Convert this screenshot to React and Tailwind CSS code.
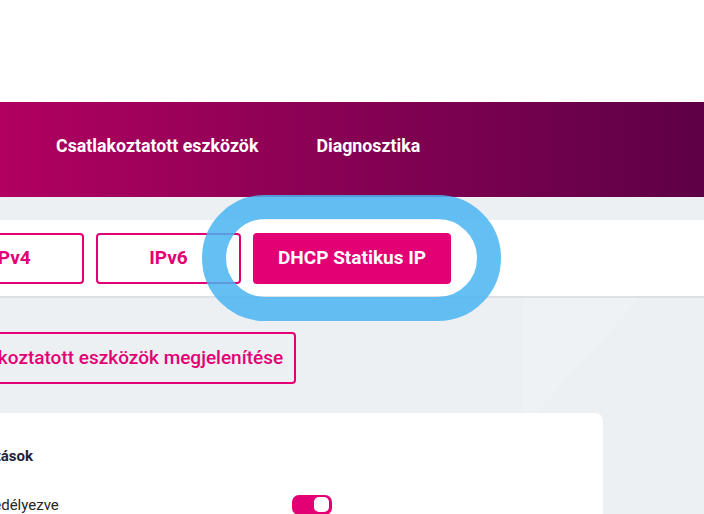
import React from 'react';

const font = { fontFamily: 'Roboto, "Noto Sans", sans-serif' };

function Toggle() {
  return (
    <div className="w-[40px] h-[20px] rounded-[7px] bg-[#e20074] flex items-center justify-end p-[3px]">
      <div className="w-[15px] h-[15px] rounded-[5px] bg-white" />
    </div>
  );
}

export default function App() {
  return (
    <div className="w-[704px] h-[514px] overflow-hidden bg-[#ecf0f3] relative" style={font}>
      {/* faint background decoration */}
      <svg className="absolute left-0 top-[298px] pointer-events-none" width="704" height="216">
        <polygon points="523,0 640,0 523,130" fill="#eff2f5" />
      </svg>

      <div className="h-[102px] bg-white relative" />

      <header className="relative h-[95px] bg-gradient-to-r from-[#b10060] to-[#5e0046] flex items-center pl-[56px] pb-[6px] gap-[58px] text-white font-bold text-[17.8px]">
        <span>Csatlakoztatott eszközök</span>
        <span>Diagnosztika</span>
      </header>

      <main className="relative">
        <div className="mt-[23px] h-[78px] bg-white border-b-2 border-[#dde0e4] flex items-start pt-[13px] gap-[12px] -ml-[61px]">
          <button className="w-[145px] h-[51px] rounded-[4px] border-2 border-[#e20074] text-[#e20074] font-bold text-[19px]">IPv4</button>
          <button className="w-[145px] h-[51px] rounded-[4px] border-2 border-[#e20074] text-[#e20074] font-bold text-[19px]">IPv6</button>
          <button className="w-[198px] h-[51px] rounded-[4px] bg-[#e20074] text-white font-bold text-[19px]">DHCP Statikus IP</button>
        </div>

        <div className="mt-[34px] -ml-[82px]">
          <button className="h-[52px] rounded-[4px] border-2 border-[#e20074] text-[#e20074] font-medium text-[19px] pl-[24px] pr-[11px]">
            Csatlakoztatott eszközök megjelenítése
          </button>
        </div>

        <div className="mt-[29px] -ml-[40px] w-[643px] h-[120px] bg-white rounded-lg pt-[32px] pl-[8px]">
          <div className="font-bold text-[15px] text-[#1c2340] -ml-[10px]">Beállítások</div>
          <div className="mt-[26px] flex items-center justify-between w-[364px]">
            <span className="text-[15px] text-[#262626]">Engedélyezve</span>
            <Toggle />
          </div>
        </div>
      </main>

      <div className="absolute left-[202px] top-[195px] w-[299px] h-[126px] rounded-[64px] border-[24px] border-[rgba(73,180,241,0.85)] pointer-events-none" />
    </div>
  );
}
